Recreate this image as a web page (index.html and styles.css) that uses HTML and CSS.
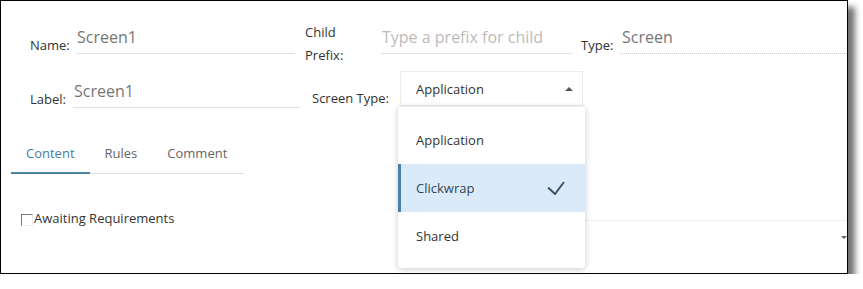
FILE: index.html
```html
<!DOCTYPE html>
<html>
<head>
    <meta charset="utf-8">
    <link rel="stylesheet" href="styles.css">
</head>
<body>
    <div class="frame">
        <div class="row row-top">
            <div class="field field-name">
                <span class="label">Name:</span>
                <span class="input">Screen1</span>
            </div>
            <div class="field field-prefix">
                <span class="label">Child<br>Prefix:</span>
                <span class="input placeholder">Type a prefix for child</span>
            </div>
            <div class="field field-type">
                <span class="label">Type:</span>
                <span class="input dotted">Screen</span>
            </div>
        </div>

        <div class="row row-mid">
            <div class="field field-label">
                <span class="label">Label:</span>
                <span class="input">Screen1</span>
            </div>
            <div class="field field-screen">
                <span class="label">Screen Type:</span>
                <div class="select">
                    <span>Application</span>
                    <span class="caret-up"></span>
                </div>
            </div>
        </div>

        <div class="tabs">
            <div class="tab active">Content</div>
            <div class="tab">Rules</div>
            <div class="tab">Comment</div>
        </div>

        <div class="row row-bottom">
            <div class="check">
                <span class="box"></span>
                <span class="check-label">Awaiting Requirements</span>
            </div>
            <div class="sub-field">
                <span class="caret-down"></span>
            </div>
        </div>

        <!-- open dropdown of Screen Type -->
        <div class="menu">
            <div class="menu-item">Application</div>
            <div class="menu-item selected">
                <span>Clickwrap</span>
                <svg width="18" height="14" viewBox="0 0 18 14">
                    <polyline points="1,6.5 8,13 17,1" fill="none" stroke="#3c5468" stroke-width="2"/>
                </svg>
            </div>
            <div class="menu-item">Shared</div>
        </div>
    </div>
</body>
</html>
```

FILE: styles.css
```css
* {
    margin: 0;
    padding: 0;
    box-sizing: border-box;
}

body {
    background: #fff;
    font-family: "Open Sans", "Liberation Sans", sans-serif;
    color: #333;
}

.frame {
    position: relative;
    width: 848px;
    height: 274px;
    border: 1px solid #000;
    background: #fff;
    padding-top: 20px;
    box-shadow: 7px 7px 6px rgba(0, 0, 0, 0.55);
}

.row {
    display: flex;
    align-items: flex-start;
}

.field {
    display: flex;
    align-items: flex-end;
}

.label {
    font-size: 13px;
    line-height: 18px;
    white-space: nowrap;
}

.input {
    display: block;
    height: 28px;
    font-size: 16px;
    line-height: 22px;
    padding: 0 0 5px 1px;
    color: #777;
    border-bottom: 1px solid #e2e2e2;
    white-space: nowrap;
}

.placeholder {
    color: #bbb;
}

.dotted {
    border-bottom: 1px dotted #c8c8c8;
    padding-left: 2px;
}

/* top row */
.row-top {
    margin-left: 29px;
}

.row-top .field {
    height: 33px;
}

.field-name .label { width: 46px; }
.field-name .input { width: 219px; }

.field-prefix { margin-left: 10px; }
.field-prefix .label {
    width: 76px;
    line-height: 23px;
    align-self: flex-start;
}
.field-prefix .input { width: 191px; }

.field-type {
    flex: 1;
    margin-left: 9px;
}
.field-type .label { width: 39px; }
.field-type .input { flex: 1; }

/* second row */
.row-mid {
    margin: 17px 0 0 29px;
    align-items: flex-end;
}

.field-label .label { width: 43px; }
.field-label .input { width: 227px; }

.field-screen { margin-left: 12px; }
.field-screen .label {
    width: 88px;
    margin-bottom: 1px;
}

.select {
    width: 183px;
    height: 35px;
    margin-bottom: 2px;
    border: 1px solid #ebebeb;
    padding: 0 9px 0 15px;
    display: flex;
    align-items: center;
    justify-content: space-between;
    font-size: 13px;
}

.caret-up {
    width: 0;
    height: 0;
    border-left: 4px solid transparent;
    border-right: 4px solid transparent;
    border-bottom: 4px solid #555;
}

/* tabs */
.tabs {
    display: flex;
    width: 233px;
    margin: 28px 0 0 10px;
    border-bottom: 1px solid #ddd;
}

.tab {
    padding: 8px 15px 10px;
    font-size: 13px;
    line-height: 18px;
    color: #666;
    border-bottom: 2px solid transparent;
    margin-bottom: -1px;
}

.tab.active {
    color: #4a7c9b;
    border-bottom-color: #4f84a6;
}

/* content */
.row-bottom {
    margin-top: 35px;
}

.check {
    display: flex;
    align-items: flex-start;
    width: 378px;
    margin-left: 20px;
}

.box {
    width: 12px;
    height: 12px;
    margin-top: 5px;
    border: 1px solid;
    border-color: #777 #eee #eee #777;
}

.check-label {
    font-size: 13px;
    line-height: 18px;
    margin-left: 1px;
}

.sub-field {
    flex: 1;
    height: 30px;
    margin-top: 11px;
    padding-top: 15px;
    border-top: 1px solid #eee;
    display: flex;
    justify-content: flex-end;
    align-items: flex-start;
}

.caret-down {
    width: 0;
    height: 0;
    border-left: 3px solid transparent;
    border-right: 3px solid transparent;
    border-top: 3px solid #666;
}

/* dropdown */
.menu {
    position: absolute;
    left: 397px;
    top: 106px;
    width: 187px;
    height: 161px;
    padding: 9px 0 8px;
    background: #fff;
    border-radius: 3px;
    box-shadow: 0 1px 6px rgba(0, 0, 0, 0.22);
}

.menu-item {
    height: 48px;
    display: flex;
    align-items: center;
    justify-content: space-between;
    padding: 0 20px 0 18px;
    font-size: 13px;
    color: #333;
}

.menu-item.selected {
    background: #dbeaf8;
    border-left: 3px solid #4a7fa6;
    padding-left: 15px;
    color: #2f4659;
}
```
